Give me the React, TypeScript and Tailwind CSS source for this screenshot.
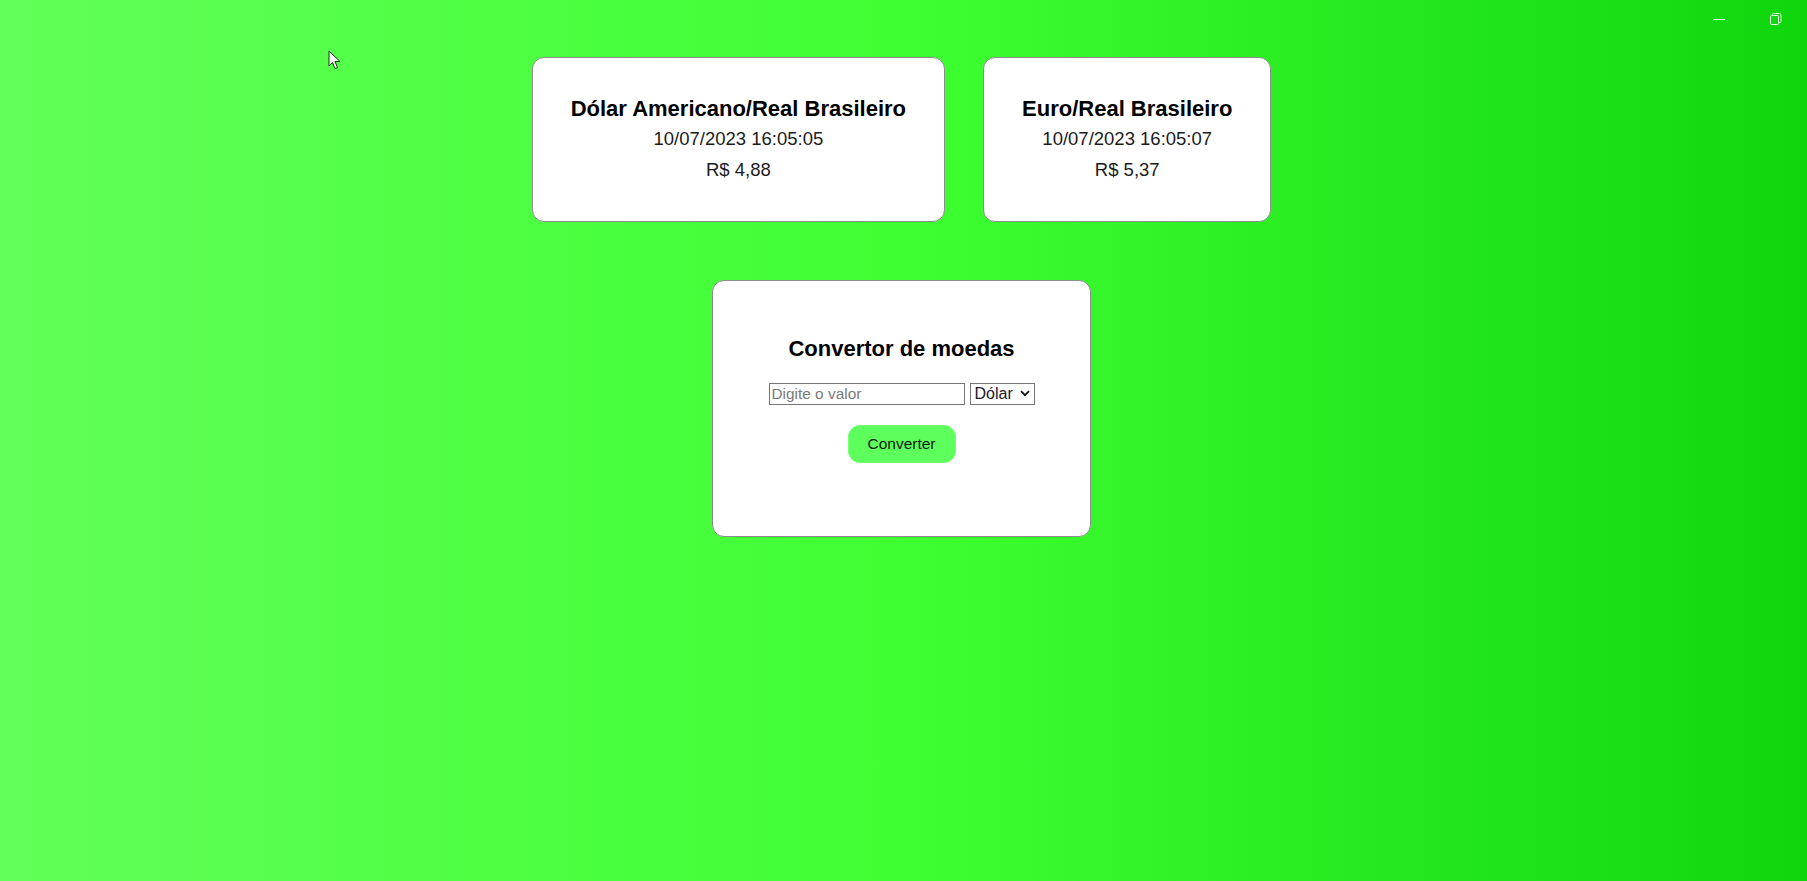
import React from "react";

function QuoteCard({ title, date, price }: { title: string; date: string; price: string }) {
  return (
    <div className="rounded-[12px] border border-[#8c8c8c] bg-white px-[38px] pt-[38px] pb-[41px] text-center">
      <h2 className="whitespace-nowrap text-[22px] font-bold leading-[25px] text-black">{title}</h2>
      <p className="mt-[7px] text-[18.5px] leading-[21px] text-[#1c1c1c]">{date}</p>
      <p className="mt-[10px] text-[18.5px] leading-[21px] text-[#1c1c1c]">{price}</p>
    </div>
  );
}

export default function App() {
  return (
    <div className="relative h-[881px] w-full overflow-hidden bg-[linear-gradient(to_right,#62ff58,#3eff32_50%,#0fd60c)] font-['Liberation_Sans',Arial,sans-serif]">
      <div className="flex flex-col items-center pt-[57px] pr-[4px]">
        <div className="flex gap-[38px]">
          <QuoteCard title="Dólar Americano/Real Brasileiro" date="10/07/2023 16:05:05" price="R$ 4,88" />
          <QuoteCard title="Euro/Real Brasileiro" date="10/07/2023 16:05:07" price="R$ 5,37" />
        </div>

        <div className="mt-[58px] flex h-[257px] w-[379px] flex-col items-center rounded-[12px] border border-[#8c8c8c] bg-white pt-[55px]">
          <h2 className="text-[22px] font-bold leading-[25px] text-black">Convertor de moedas</h2>
          <div className="mt-[22px] flex items-start">
            <input
              type="text"
              placeholder="Digite o valor"
              className="h-[22px] w-[196px] border border-[#767676] px-[2px] text-[15.4px] leading-[20px] text-black outline-none placeholder:text-[#7a7a7a]"
            />
            <div className="relative ml-[5px] -mt-[1px]">
              <select className="h-[22px] w-[65px] appearance-none border border-[#767676] bg-white pl-[4px] text-[16px] leading-[20px] text-[#1a1a2e] outline-none">
                <option>Dólar</option>
                <option>Euro</option>
              </select>
              <svg
                className="pointer-events-none absolute right-[5px] top-[8px]"
                width="10"
                height="7"
                viewBox="0 0 10 7"
                fill="none"
              >
                <path d="M1 1.2 L5 5.2 L9 1.2" stroke="#111" strokeWidth="1.8" />
              </svg>
            </div>
          </div>
          <button className="mt-[19px] h-[38px] w-[108px] rounded-[12px] border border-[#72ff72] bg-[#5dff5d] text-[15.5px] text-[#102010]">
            Converter
          </button>
        </div>
      </div>

      {/* window controls */}
      <div className="absolute right-[25px] top-[12px] flex items-center gap-[45px]">
        <svg width="12" height="14" viewBox="0 0 12 14" fill="none">
          <path d="M0 7.5 H12" stroke="#e8ffe8" strokeWidth="1" />
        </svg>
        <svg width="12" height="14" viewBox="0 0 12 14" fill="none">
          <rect x="0.5" y="3.5" width="8" height="9" rx="1" stroke="#f2fff2" strokeWidth="1" />
          <path d="M2.5 3 V2.5 A1 1 0 0 1 3.5 1.5 H9.5 A1.5 1.5 0 0 1 11 3 V9.5 A1 1 0 0 1 10 10.5 H9" stroke="#d8ffd8" strokeWidth="1" />
        </svg>
      </div>

      {/* mouse cursor */}
      <svg className="absolute left-[328px] top-[50px]" width="14" height="20" viewBox="0 0 14 20" fill="none">
        <path d="M1 1 V16 L4.5 12.5 L7 18.5 L9.5 17.5 L7 11.5 H12 Z" fill="#ffffff" stroke="#0d3a0d" strokeWidth="1" strokeLinejoin="round" />
      </svg>
    </div>
  );
}
